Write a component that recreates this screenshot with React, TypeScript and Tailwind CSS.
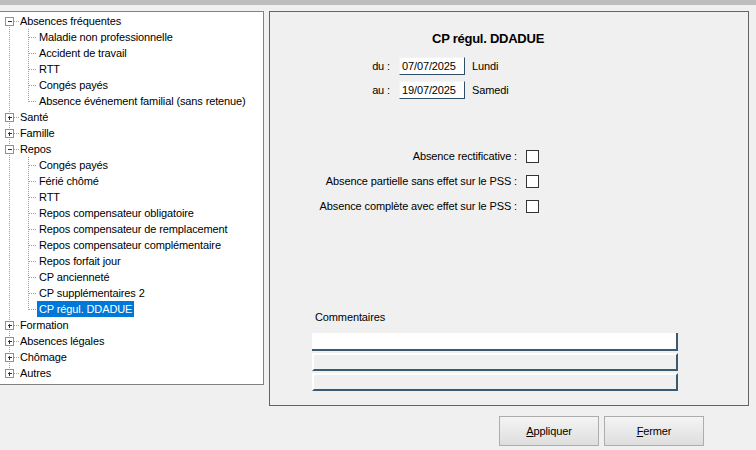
import React from "react";

type Node = { label: string; open?: boolean; children?: string[] };

const tree: Node[] = [
  {
    label: "Absences fréquentes",
    open: true,
    children: [
      "Maladie non professionnelle",
      "Accident de travail",
      "RTT",
      "Congés payés",
      "Absence événement familial (sans retenue)",
    ],
  },
  { label: "Santé" },
  { label: "Famille" },
  {
    label: "Repos",
    open: true,
    children: [
      "Congés payés",
      "Férié chômé",
      "RTT",
      "Repos compensateur obligatoire",
      "Repos compensateur de remplacement",
      "Repos compensateur complémentaire",
      "Repos forfait jour",
      "CP ancienneté",
      "CP supplémentaires 2",
      "CP régul. DDADUE",
    ],
  },
  { label: "Formation" },
  { label: "Absences légales" },
  { label: "Chômage" },
  { label: "Autres" },
];

const DOT = "#a0a0a0";

// connectors for one 16px row
function Lines({ depth, first, lastRoot, lastChild, expander, open }: {
  depth: number;
  first?: boolean;
  lastRoot?: boolean;
  lastChild?: boolean;
  expander?: boolean;
  open?: boolean;
}) {
  const w = depth === 0 ? 20 : 39;
  return (
    <svg width={w} height={16} className="shrink-0" shapeRendering="crispEdges">
      {/* root level vertical */}
      {depth === 0 ? (
        <line x1={9.5} y1={first ? 8 : 0} x2={9.5} y2={lastRoot ? 8 : 16} stroke={DOT} strokeDasharray="1 1" />
      ) : (
        !lastRoot && <line x1={9.5} y1={0} x2={9.5} y2={16} stroke={DOT} strokeDasharray="1 1" />
      )}
      {depth === 0 && <line x1={14} y1={8.5} x2={19} y2={8.5} stroke={DOT} strokeDasharray="1 1" />}
      {depth === 1 && (
        <>
          <line x1={28.5} y1={0} x2={28.5} y2={lastChild ? 9 : 16} stroke={DOT} strokeDasharray="1 1" />
          <line x1={29} y1={8.5} x2={37} y2={8.5} stroke={DOT} strokeDasharray="1 1" />
        </>
      )}
      {expander && (
        <g>
          <rect x={5.5} y={4.5} width={8} height={8} fill="#fff" stroke="#919191" />
          <line x1={7.5} y1={8.5} x2={12} y2={8.5} stroke="#333" />
          {!open && <line x1={9.5} y1={6.5} x2={9.5} y2={11} stroke="#333" />}
        </g>
      )}
    </svg>
  );
}

function TreeView() {
  const rows: React.ReactNode[] = [];
  tree.forEach((n, i) => {
    const lastRoot = i === tree.length - 1;
    rows.push(
      <div key={"r" + i} className="flex h-4 items-center">
        <Lines depth={0} first={i === 0} lastRoot={lastRoot} expander open={n.open} />
        <span className="leading-4">{n.label}</span>
      </div>
    );
    if (n.open && n.children) {
      n.children.forEach((c, j) => {
        const selected = c === "CP régul. DDADUE";
        rows.push(
          <div key={"c" + i + "-" + j} className="flex h-4 items-center">
            <Lines depth={1} lastRoot={lastRoot} lastChild={j === n.children!.length - 1} />
            <span className={selected ? "ml-[-2px] bg-[#0078d7] px-[2px] leading-4 text-white" : "leading-4"}>{c}</span>
          </div>
        );
      });
    }
  });
  return <div className="pt-[1px]">{rows}</div>;
}

function DateBox({ value }: { value: string }) {
  return (
    <div className="flex h-[18px] w-[66px] items-center border-b border-r border-l border-t border-b-[#2f4f68] border-r-[#2f4f68] border-l-[#f4f4f4] border-t-[#f4f4f4] bg-white pl-[2px]">
      {value}
    </div>
  );
}

function CheckRow({ label }: { label: string }) {
  return (
    <div className="flex h-[25px] items-center">
      <div className="w-[247px] text-right">{label}</div>
      <div className="ml-[9px] h-[13px] w-[13px] border border-[#333] bg-white" />
    </div>
  );
}

function Btn({ first, rest }: { first: string; rest: string }) {
  return (
    <button className="flex h-[30px] w-[100px] items-center justify-center border border-[#adadad] bg-gradient-to-b from-[#f4f4f4] to-[#dedede] text-black">
      <span>
        <span className="underline">{first}</span>
        {rest}
      </span>
    </button>
  );
}

export default function App() {
  return (
    <div
      className="relative h-[450px] w-[756px] overflow-hidden bg-[#f0f0f0] text-[11px] tracking-[-0.12px] text-black"
      style={{ fontFamily: '"Liberation Sans", Arial, sans-serif' }}
    >
      <div className="h-[5px] bg-[#bebebe]" />
      <div className="mt-[6px] flex">
        <div className="h-[374px] w-[264px] border-y border-r border-[#828282] bg-white">
          <TreeView />
        </div>
        <div className="ml-[5px] flex flex-col">
          <div className="flex h-[395px] w-[480px] flex-col border border-[#646464]">
            <div className="mt-[19px] ml-[162px] text-[13px] font-bold leading-4 tracking-[-0.25px]">CP régul. DDADUE</div>
            <div className="mt-[10px] flex items-center">
              <div className="ml-[89px] w-[31px] text-right">du :</div>
              <div className="ml-[9px]"><DateBox value="07/07/2025" /></div>
              <div className="ml-[7px]">Lundi</div>
            </div>
            <div className="mt-[6px] flex items-center">
              <div className="ml-[89px] w-[31px] text-right">au :</div>
              <div className="ml-[9px]"><DateBox value="19/07/2025" /></div>
              <div className="ml-[7px]">Samedi</div>
            </div>
            <div className="mt-[45px]">
              <CheckRow label="Absence rectificative :" />
              <CheckRow label="Absence partielle sans effet sur le PSS :" />
              <CheckRow label="Absence complète avec effet sur le PSS :" />
            </div>
            <div className="mt-[90px] ml-[45px] leading-4">Commentaires</div>
            <div className="mt-[8px] ml-[42px] flex w-[366px] flex-col gap-[2px]">
              <div className="h-[18px] border-r-2 border-b-2 border-[#3b5a70] bg-white" />
              <div className="h-[18px] border-t-2 border-l-2 border-r-2 border-b-2 border-t-white border-l-white border-r-[#3b5a70] border-b-[#3b5a70] bg-[#f0f0f0]" />
              <div className="h-[18px] border-t-2 border-l-2 border-r-2 border-b-2 border-t-white border-l-white border-r-[#3b5a70] border-b-[#3b5a70] bg-[#f0f0f0]" />
            </div>
          </div>
          <div className="mt-[10px] ml-[230px] flex gap-[5px]">
            <Btn first="A" rest="ppliquer" />
            <Btn first="F" rest="ermer" />
          </div>
        </div>
      </div>
    </div>
  );
}
